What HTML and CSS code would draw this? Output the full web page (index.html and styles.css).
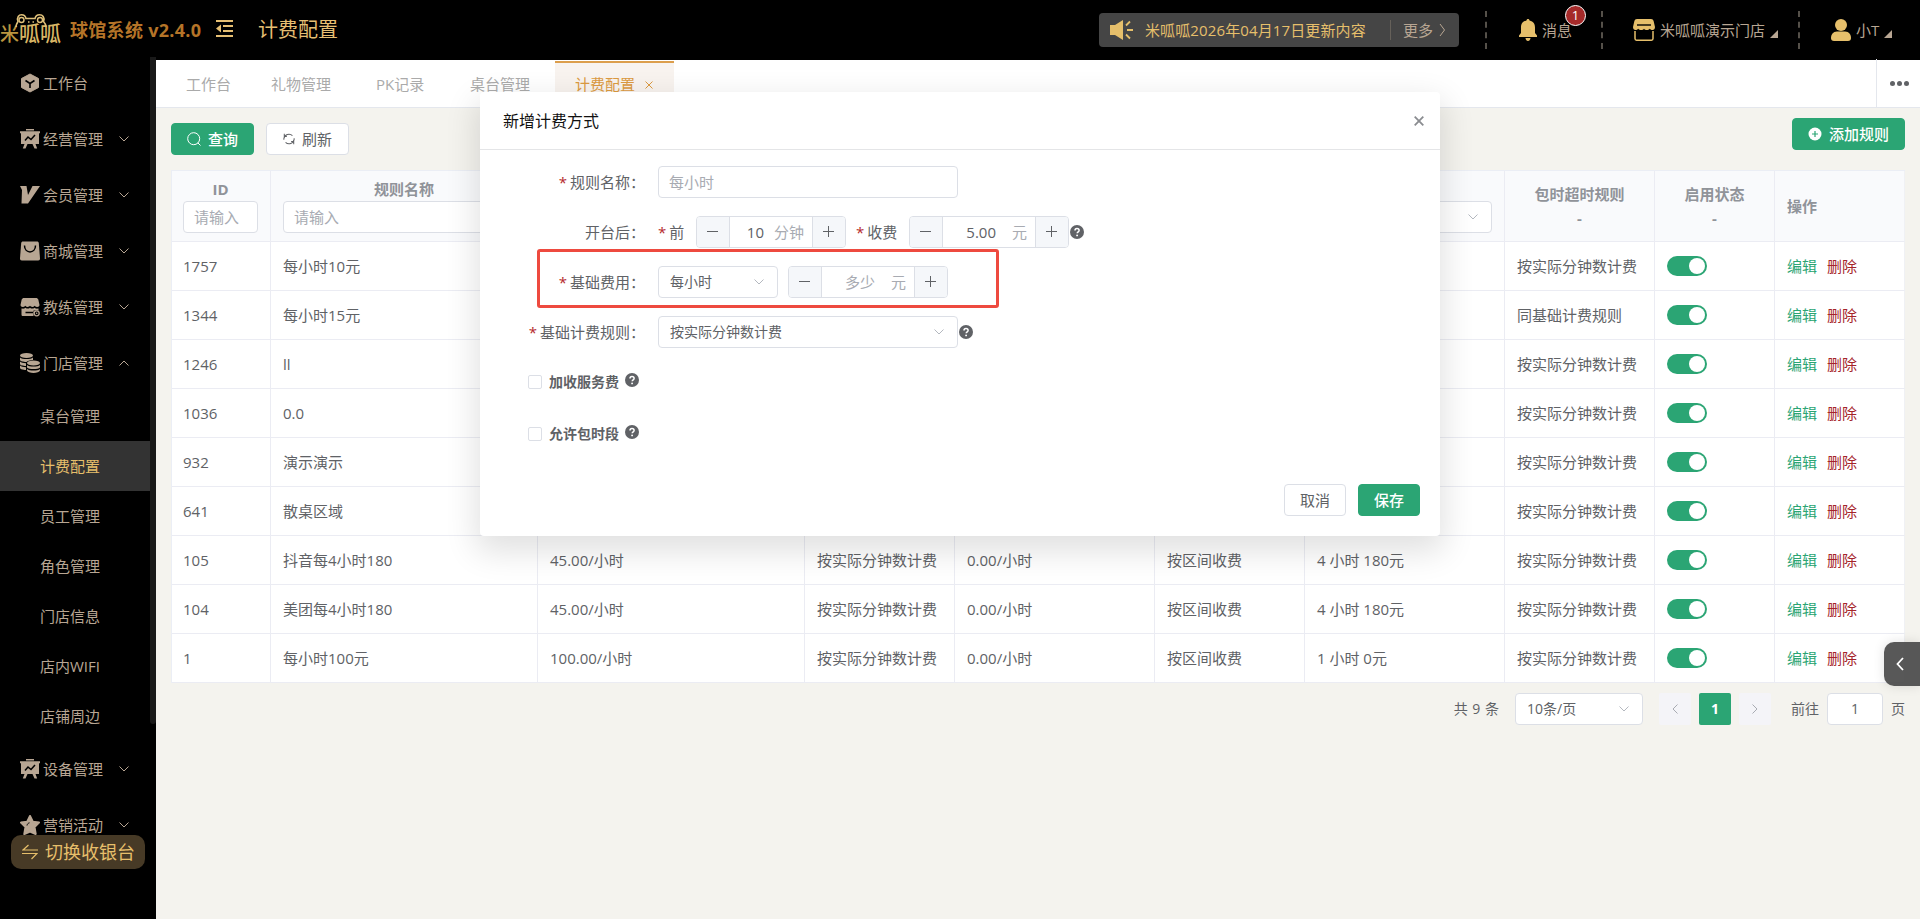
FILE: index.html
```html
<!DOCTYPE html>
<html lang="zh-CN">
<head>
  <meta charset="UTF-8" />
  <meta name="viewport" content="width=device-width, initial-scale=1" />
  <title>计费配置</title>
  <link rel="stylesheet" href="styles.css">
</head>
<body>
  <svg class="sprite" width="0" height="0">
    <symbol id="i-down" viewBox="0 0 12 12"><path d="M1.5 3.5 6 8l4.5-4.5" fill="none" stroke="currentColor"/></symbol>
    <symbol id="i-up" viewBox="0 0 12 12"><path d="M1.5 8.5 6 4l4.5 4.5" fill="none" stroke="currentColor"/></symbol>
    <symbol id="i-left" viewBox="0 0 12 12"><path d="M8.5 1.5 4 6l4.5 4.5" fill="none" stroke="currentColor"/></symbol>
    <symbol id="i-right" viewBox="0 0 12 12"><path d="M3.5 1.5 8 6l-4.5 4.5" fill="none" stroke="currentColor"/></symbol>
    <symbol id="i-help" viewBox="0 0 14 14"><circle cx="7" cy="7" r="7" fill="#606266"/><path d="M5 5.6C5 4.3 5.9 3.6 7 3.6s2.1.7 2.1 1.8c0 1.4-1.9 1.5-1.9 2.9" fill="none" stroke="#fff" stroke-width="1.5"/><circle cx="7.1" cy="10.4" r=".95" fill="#fff"/></symbol>
    <symbol id="i-board" viewBox="0 0 20 20"><path d="M6 0h8v1.500H6zM0 2.300h20v2h-1V15H1V4.300H0zM4.500 15h3l-2 4.500H2.800zM12.500 15h3l1.700 4.500h-2.700z" fill="currentColor"/><path d="m5 11.500 3-3.500 3 2.500 4-4.500" fill="none" stroke="#000" stroke-width="1.500"/></symbol>
  </svg>

  <header class="header">
    <div class="logo">
      <span class="logo-text"><small>米</small>呱呱</span>
      <svg class="frog" width="32" height="13" viewBox="0 0 32 13"><path d="M1 13C1 11 2 9 3 7.500 1.500 3 4 .8 6.500.8c2.500 0 4 1.500 4.500 3.700h9C20.500 2.300 22 .8 24.500.8 27.500.8 30 3 28.500 7.500 30 9 31 11 31 13" fill="none" stroke="#dfc07a" stroke-width="1.600"/><g fill="none" stroke="#dfc07a" stroke-width="1.400"><circle cx="6.500" cy="6" r="2.500"/><circle cx="25" cy="6" r="2.500"/><path d="M13 8h1.500M17.500 8H19"/></g></svg>
    </div>
    <div class="brand">球馆系统 v2.4.0</div>
    <svg class="fold" width="17" height="17" viewBox="0 0 17 17" fill="#e6bf73"><path d="M0 0h17v2H0zM7 5h10v2H7zM7 10h10v2H7zM0 15h17v2H0zM5 4.500v8L0 8.500z"/></svg>
    <div class="page-title">计费配置</div>

    <div class="notice">
      <svg width="24" height="20" viewBox="0 0 24 20"><path d="M0 5h5l8-5v20l-8-5H0z" fill="#e6bf6b"/><path d="M16 5.500 20 1.500M17 10h6M16 14.500l4 4" stroke="#e6bf6b" stroke-width="1.800"/></svg>
      <span class="notice-text">米呱呱2026年04月17日更新内容</span>
      <span class="notice-more">更多<svg width="12" height="14" viewBox="0 0 12 14"><path d="m4 1 4.500 6L4 13" fill="none" stroke="currentColor"/></svg></span>
    </div>
    <div class="head-item msg">
      <svg width="18" height="22" viewBox="0 0 18 22" fill="#e6bf6b"><path d="M9 0c.9 0 1.500.7 1.500 1.500C14.500 2.300 16 5 16 8.500V14l2 2.500V18H0v-1.500L2 14V8.500C2 5 3.500 2.300 7.500 1.500 7.500.7 8.100 0 9 0zM6.500 19h5c0 1.500-1 3-2.500 3s-2.500-1.500-2.500-3z"/></svg>
      <span>消息</span><b class="badge">1</b>
    </div>
    <div class="head-item store">
      <svg width="22" height="22" viewBox="0 0 22 22"><path d="M4 0h14c1.500 0 2.200.7 2.600 2L22 8c0 2-1 3-2.500 3-1 0-2-.5-2.800-1.300-1 1-1.700 1.300-2.900 1.300S11.800 10.700 11 9.700C10.200 10.700 9.500 11 8.200 11s-1.900-.3-2.900-1.300C4.500 10.500 3.500 11 2.500 11 1 11 0 10 0 8l1.400-6C1.800.7 2.500 0 4 0z" fill="#e6bf6b"/><path d="M4 6h14" stroke="#000" stroke-width="1.400"/><path d="M2 12v7.500c0 1 .5 1.700 1.500 1.700h15c1 0 1.500-.7 1.500-1.700V12" fill="none" stroke="#e6bf6b" stroke-width="1.500"/></svg>
      <span>米呱呱演示门店</span><i class="tri"></i>
    </div>
    <div class="head-item user">
      <svg width="20" height="22" viewBox="0 0 20 22" fill="#e6bf6b"><circle cx="10" cy="6" r="6"/><path d="M6 12.500h8c4 0 6 3 6 6.500 0 2-1 3-3 3H3c-2 0-3-1-3-3 0-3.500 2-6.500 6-6.500z"/></svg>
      <span>小T</span><i class="tri"></i>
    </div>
  </header>

  <div class="layout">
    <aside class="sidebar">
      <nav class="menu">
        <div class="menu-item"><svg viewBox="0 0 20 20"><path d="M10 1 18.500 5.500v9L10 19l-8.500-4.500v-9z" fill="currentColor" stroke="currentColor" stroke-linejoin="round"/><path d="m5.500 7.500 4.500 3 4.500-3M10 10.500V15" fill="none" stroke="#000" stroke-width="1.600"/></svg><span>工作台</span></div>
        <div class="menu-item"><svg><use href="#i-board"/></svg><span>经营管理</span><svg class="arrow"><use href="#i-down"/></svg></div>
        <div class="menu-item"><svg viewBox="0 0 20 20"><path d="M0 1h6.500l1.500 9L12.500 1H20L8 18.500H1.500L2 5z" fill="currentColor"/></svg><span>会员管理</span><svg class="arrow"><use href="#i-down"/></svg></div>
        <div class="menu-item"><svg viewBox="0 0 20 20"><path d="M3 .5h14c1 0 1.700.6 1.800 1.500L20 17.500c0 1.200-.6 1.900-1.800 1.900H1.800C.6 19.400 0 18.700 0 17.500L1.200 2C1.300 1.100 2 .5 3 .5z" fill="currentColor"/><path d="M4.500 4.500c0 8.500 11 8.500 11 0" fill="none" stroke="#000" stroke-width="1.500"/></svg><span>商城管理</span><svg class="arrow"><use href="#i-down"/></svg></div>
        <div class="menu-item"><svg viewBox="0 0 20 20"><path d="M4 1h12c1 0 2 .6 2.300 1.500L19.500 8c0 1-1 2-2.300 2-1 0-1.900-.4-2.500-1.200C14 9.600 13.200 10 12.300 10S10.500 9.500 10 8.800C9.500 9.500 8.600 10 7.700 10s-1.700-.4-2.400-1.200C4.700 9.600 3.800 10 2.800 10 1.500 10 .5 9 .5 8l1.200-5.500C2 1.600 3 1 4 1zM1.500 11.500c3 .5 3.500-.5 4-.8 1.500 1.300 3.300 1.100 4.500 0 1.200 1.100 3 1.300 4.500 0 .5.300 1 1.300 4 .8v2h-5v5.500H3c-1 0-1.500-.500-1.500-1.500z" fill="currentColor"/><path d="M5.500 15.500H13" stroke="#000" stroke-width="1.500"/><circle cx="16.700" cy="16.300" r="2.500" fill="#000" stroke="currentColor" stroke-width="1.300"/><circle cx="16.700" cy="16.300" r=".8" fill="currentColor"/></svg><span>教练管理</span><svg class="arrow"><use href="#i-down"/></svg></div>
        <div class="menu-item"><svg viewBox="0 0 20 20" fill="currentColor"><ellipse cx="6.500" cy="2.500" rx="6.500" ry="2.500"/><path d="M0 4.500c2 2 11 2 13 0V7c-3 0-6 1-6.500 2C3 9 0 8 0 7zM0 8.500c1 1.200 3.500 1.700 6 1.700V13C3 13 0 12.300 0 11zM0 12.500c1 1.200 3.500 1.700 6 1.700V17c-3 0-6-1-6-2z"/><ellipse cx="13.500" cy="10" rx="6.500" ry="2.500"/><path d="M7 12c2 2 11 2 13 0v2.500c-2 2-11 2-13 0zM7 16c2 2 11 2 13 0v1.500c-1 3.300-12 3.300-13 0z"/></svg><span>门店管理</span><svg class="arrow"><use href="#i-up"/></svg></div>
        <div class="sub-item">桌台管理</div>
        <div class="sub-item active">计费配置</div>
        <div class="sub-item">员工管理</div>
        <div class="sub-item">角色管理</div>
        <div class="sub-item">门店信息</div>
        <div class="sub-item">店内WIFI</div>
        <div class="sub-item">店铺周边</div>
        <div class="menu-item"><svg><use href="#i-board"/></svg><span>设备管理</span><svg class="arrow"><use href="#i-down"/></svg></div>
        <div class="menu-item"><svg viewBox="0 0 20 20"><path d="m10 1 2.800 5.700 6.200.9-4.500 4.400 1.200 7L10 16.500 4.300 19l1.200-7L1 7.600l6.200-.9z" fill="currentColor" stroke="currentColor" stroke-width="2" stroke-linejoin="round"/><path d="M7 10.500c.3-1.500 1-2.300 2.500-2.700" fill="none" stroke="#000"/></svg><span>营销活动</span><svg class="arrow"><use href="#i-down"/></svg></div>
      </nav>
      <div class="scrollbar"></div>
      <div class="switch-btn">
        <svg width="16" height="16" viewBox="0 0 16 16" fill="none" stroke="currentColor" stroke-width="1.200"><path d="M6.500 1 1 6h15M0 9.500h15L9.500 15"/></svg>切换收银台
      </div>
    </aside>

    <main class="main">
      <div class="tabs">
        <div class="tab first">工作台</div>
        <div class="tab">礼物管理</div>
        <div class="tab pk">PK记录</div>
        <div class="tab">桌台管理</div>
        <div class="tab active">计费配置<svg width="8" height="8" viewBox="0 0 8 8"><path d="m.5.5 7 7m0-7-7 7" stroke="currentColor"/></svg></div>
        <div class="tab-more"><i></i><i></i><i></i></div>
      </div>

      <div class="content">
        <div class="toolbar">
          <button class="btn primary"><svg width="14" height="14" viewBox="0 0 14 14" fill="none" stroke="currentColor"><circle cx="6.700" cy="6.700" r="6"/><path d="m10.800 10.800 2.700 2.700"/></svg>查询</button>
          <button class="btn"><svg width="12" height="12" viewBox="0 0 14 14" fill="none" stroke="currentColor" stroke-width="1.200"><path d="M1 8V6.500A6 6 0 0 1 11 3M13 6v1.500A6 6 0 0 1 3 11M1.500 1v3h3M12.500 13v-3h-3"/></svg>刷新</button>
          <button class="btn primary add"><svg width="14" height="14" viewBox="0 0 14 14"><circle cx="7" cy="7" r="6.500" fill="#fff"/><path d="M7 4v6M4 7h6" stroke="#2ba574" stroke-width="1.200"/></svg>添加规则</button>
        </div>

        <table class="table">
          <colgroup>
            <col class="w100"><col class="w267"><col class="w267"><col class="w150"><col class="w200"><col class="w150"><col class="w200"><col class="w150"><col class="w120"><col class="w130">
          </colgroup>
          <thead>
            <tr>
              <th><div class="caption">ID</div><div class="field">请输入</div></th>
              <th><div class="caption">规则名称</div><div class="field">请输入</div></th>
              <th></th><th></th><th></th><th></th>
              <th><div class="caption"></div><div class="field"><svg class="caret"><use href="#i-down"/></svg></div></th>
              <th>包时超时规则<div class="dash">-</div></th>
              <th>启用状态<div class="dash">-</div></th>
              <th class="left">操作</th>
            </tr>
          </thead>
          <tbody id="rows"></tbody>
        </table>

        <div class="pager">
          <span class="total">共 9 条</span>
          <div class="select size">10条/页<svg class="caret"><use href="#i-down"/></svg></div>
          <div class="page"><svg><use href="#i-left"/></svg></div>
          <div class="page current">1</div>
          <div class="page"><svg><use href="#i-right"/></svg></div>
          <span class="goto">前往</span>
          <div class="goto-input">1</div>
          <span>页</span>
        </div>
      </div>
    </main>
  </div>

  <div class="drawer-handle"><svg width="8" height="14" viewBox="0 0 8 14"><path d="M7 1 1.500 7 7 13" fill="none" stroke="#fff" stroke-width="1.800"/></svg></div>

  <div class="dialog">
    <div class="dialog-head">新增计费方式<svg width="10" height="10" viewBox="0 0 10 10"><path d="m.7.7 8.600 8.600m0-8.600L.7 9.300" stroke="#8a8c90" stroke-width="1.800"/></svg></div>
    <div class="dialog-body">
      <div class="form-row">
        <label><em>*</em>规则名称：</label>
        <div class="select wide placeholder">每小时</div>
      </div>
      <div class="form-row">
        <label>开台后：</label>
        <span class="inner"><em>*</em>前</span>
        <div class="number minutes"><i class="minus"></i><span class="val">10</span><span class="unit">分钟</span><i class="plus"></i></div>
        <span class="inner fee"><em>*</em>收费</span>
        <div class="number"><i class="minus"></i><span class="val">5.00</span><span class="unit">元</span><i class="plus"></i></div>
        <svg class="help"><use href="#i-help"/></svg>
      </div>
      <div class="form-row marked">
        <label><em>*</em>基础费用：</label>
        <div class="select unit-select">每小时<svg class="caret"><use href="#i-down"/></svg></div>
        <div class="number base"><i class="minus"></i><span class="val placeholder">多少</span><span class="unit">元</span><i class="plus"></i></div>
      </div>
      <div class="form-row">
        <label><em>*</em>基础计费规则：</label>
        <div class="select wide">按实际分钟数计费<svg class="caret"><use href="#i-down"/></svg></div>
        <svg class="help"><use href="#i-help"/></svg>
      </div>
      <div class="check-row"><i class="checkbox"></i>加收服务费<svg class="help"><use href="#i-help"/></svg></div>
      <div class="check-row"><i class="checkbox"></i>允许包时段<svg class="help"><use href="#i-help"/></svg></div>
    </div>
    <div class="dialog-foot">
      <button class="btn">取消</button>
      <button class="btn primary">保存</button>
    </div>
  </div>

  <script>
    const byMinute = '按实际分钟数计费';
    const rules = [
      ['1757', '每小时10元', '', '', '', '', '', byMinute],
      ['1344', '每小时15元', '', '', '', '', '', '同基础计费规则'],
      ['1246', 'll', '', '', '', '', '', byMinute],
      ['1036', '0.0', '', '', '', '', '', byMinute],
      ['932', '演示演示', '', '', '', '', '', byMinute],
      ['641', '散桌区域', '', '', '', '', '', byMinute],
      ['105', '抖音每4小时180', '45.00/小时', byMinute, '0.00/小时', '按区间收费', '4 小时 180元', byMinute],
      ['104', '美团每4小时180', '45.00/小时', byMinute, '0.00/小时', '按区间收费', '4 小时 180元', byMinute],
      ['1', '每小时100元', '100.00/小时', byMinute, '0.00/小时', '按区间收费', '1 小时 0元', byMinute]
    ];

    document.getElementById('rows').innerHTML = rules.map(row => `
      <tr>
        ${row.map(cell => `<td>${cell}</td>`).join('')}
        <td><div class="toggle"></div></td>
        <td><a class="edit">编辑</a><a class="del">删除</a></td>
      </tr>`).join('');
  </script>
</body>
</html>
```
FILE: styles.css
```css
*,
*::before,
*::after {
  box-sizing: border-box;
}

body {
  margin: 0;
  height: 919px;
  overflow: hidden;
  position: relative;
  font-family: "Open Sans", "Noto Sans CJK SC", sans-serif;
  font-size: 15px;
  line-height: 20px;
  color: #606266;
  background: #f4f3ee;
}

.sprite {
  position: absolute;
}

i, em {
  font-style: normal;
}

/* header */
.header {
  display: flex;
  align-items: center;
  height: 60px;
  background: #000;
  color: #b8a693;
}

.logo {
  position: relative;
  width: 70px;
  height: 60px;
}

.frog {
  position: absolute;
  left: 15px;
  top: 14px;
}

.logo-text {
  position: absolute;
  left: 0;
  top: 23px;
  font-size: 21px;
  font-weight: 500;
  color: #d9b665;
  white-space: nowrap;
}

.logo-text small {
  font-size: 19px;
  color: #b9943f;
}

.brand {
  width: 146px;
  font-size: 18px;
  font-weight: bold;
  letter-spacing: .3px;
  color: #b57428;
  white-space: nowrap;
}

.fold {
  margin-top: -3px;
}

.page-title {
  margin-left: 25px;
  font-size: 20px;
  color: #e6bf73;
}

.notice {
  display: flex;
  align-items: center;
  width: 360px;
  height: 34px;
  margin-left: auto;
  padding-left: 11px;
  border-radius: 4px;
  background: #454545;
}

.notice-text {
  width: 246px;
  margin-left: 11px;
  border-right: 1px solid #66615a;
  letter-spacing: .12px;
  color: #e6bf6b;
  white-space: nowrap;
}

.notice-more {
  display: flex;
  align-items: center;
  margin-left: 12px;
}

.notice-more svg {
  margin-left: 3px;
}

.head-item {
  display: flex;
  align-items: center;
  height: 38px;
  border-left: 2px dashed #555049;
  position: relative;
}

.msg {
  width: 116px;
  margin-left: 26px;
  padding-left: 32px;
}

.store {
  width: 197px;
  padding-left: 30px;
}

.user {
  width: 122px;
  padding-left: 31px;
}

.head-item span {
  margin-left: 5px;
}

.tri {
  margin: 8px 0 0 5px;
  border-left: 8px solid transparent;
  border-bottom: 8px solid #b8a693;
}

.badge {
  position: absolute;
  left: 78px;
  top: -6px;
  width: 21px;
  height: 21px;
  border: 1px solid #fff;
  border-radius: 50%;
  background: #a52a2a;
  color: #fff;
  font-size: 13px;
  font-weight: normal;
  line-height: 19px;
  text-align: center;
}

.layout {
  display: flex;
  height: 859px;
}

/* sidebar */
.sidebar {
  position: relative;
  width: 156px;
  background: #000;
  color: #b8a693;
}

.menu {
  width: 150px;
  margin-top: -5px;
}

.menu-item {
  display: flex;
  align-items: center;
  height: 56px;
  padding-left: 20px;
}

.menu-item > svg {
  width: 20px;
  height: 20px;
}

.menu-item span {
  width: 75px;
  margin-left: 3px;
}

.menu-item .arrow {
  width: 12px;
  height: 12px;
}

.sub-item {
  height: 50px;
  padding-left: 40px;
  line-height: 50px;
}

.sub-item.active {
  background: #333;
  color: #e6bf6b;
}

.scrollbar {
  position: absolute;
  right: 0;
  top: -3px;
  width: 6px;
  height: 667px;
  border-radius: 0 0 3px 3px;
  background: #191919;
}

.switch-btn {
  position: absolute;
  left: 11px;
  top: 775px;
  display: flex;
  align-items: center;
  gap: 7px;
  width: 134px;
  height: 34px;
  padding-left: 11px;
  border-radius: 10px;
  background: #473a26;
  color: #e6bf6b;
  font-size: 18px;
  white-space: nowrap;
}

/* tabs */
.main {
  flex: 1;
}

.tabs {
  display: flex;
  align-items: flex-end;
  height: 48px;
  padding-left: 10px;
  border-bottom: 1px solid #e4e7ed;
  background: #fff;
  color: #aaa;
}

.tab {
  height: 46px;
  margin-right: 5px;
  padding: 13px 20px 0;
}

.tab.first {
  margin-right: 0;
}

.tab.pk {
  width: 89px;
  white-space: nowrap;
}

.tab.active {
  display: flex;
  gap: 10px;
  width: 119px;
  padding-top: 11px;
  border-top: 2px solid #dc9e4c;
  background: #f8f3ef;
  color: #dc9a40;
}

.tab.active svg {
  margin-top: 7px;
}

.tab-more {
  display: flex;
  align-items: center;
  gap: 2px;
  width: 44px;
  height: 48px;
  margin-left: auto;
  padding-left: 13px;
  border-left: 1px solid #e4e7ed;
}

.tab-more i {
  width: 5px;
  height: 5px;
  border-radius: 50%;
  background: #606266;
}

/* content */
.content {
  padding: 10px 15px 0;
}

.toolbar {
  display: flex;
  align-items: flex-end;
  height: 37px;
  gap: 12px;
}

.btn {
  display: flex;
  align-items: center;
  justify-content: center;
  gap: 7px;
  width: 83px;
  height: 32px;
  padding: 0;
  border: 1px solid #dcdfe6;
  border-radius: 4px;
  background: #fff;
  color: #606266;
  font: inherit;
}

.btn.primary {
  border-color: #2ba574;
  background: #2ba574;
  color: #fff;
  font-weight: 500;
}

.btn.add {
  width: 113px;
  margin: 0 0 5px auto;
}

.table {
  width: 1734px;
  margin-top: 15px;
  border: 1px solid #ebeef5;
  border-width: 1px 0 0 1px;
  border-spacing: 0;
  table-layout: fixed;
  background: #fff;
}

.w100 { width: 99px; }
.w120 { width: 120px; }
.w130 { width: 130px; }
.w150 { width: 150px; }
.w200 { width: 200px; }
.w267 { width: 267px; }

.table th,
.table td {
  padding: 0 12px;
  border: 1px solid #ebecf3;
  border-width: 0 1px 1px 0;
  text-align: left;
  white-space: nowrap;
}

.table td {
  height: 49px;
}

.table td:first-child,
.table th:first-child {
  padding-left: 11px;
}

.table th {
  height: 71px;
  background: #f9fafc;
  color: #909399;
  text-align: center;
}

.table th.left {
  text-align: left;
}

.table th:last-child,
.table td:last-child {
  border-right-color: #f0f1f4;
}

.caption {
  height: 20px;
  line-height: 18px;
}

.field {
  display: flex;
  align-items: center;
  justify-content: flex-start;
  height: 32px;
  margin-top: 1px;
  padding-left: 10px;
  border: 1px solid #dcdfe6;
  border-radius: 4px;
  background: #fff;
  color: #a8abb2;
  font-weight: normal;
}

.dash {
  padding-top: 4px;
}

.caret {
  width: 12px;
  height: 12px;
  margin: 0 12px 0 auto;
  color: #b4b8bf;
}

.toggle {
  display: flex;
  justify-content: flex-end;
  width: 40px;
  height: 20px;
  padding: 2px;
  border-radius: 10px;
  background: #2ba574;
}

.toggle::after {
  content: "";
  width: 16px;
  height: 16px;
  border-radius: 50%;
  background: #fff;
}

.edit {
  margin-right: 10px;
  color: #2ba574;
}

.del {
  color: #a5252a;
}

.pager {
  display: flex;
  align-items: center;
  justify-content: flex-end;
  height: 32px;
  margin-top: 10px;
  font-size: 14px;
}

.total {
  word-spacing: 1px;
}

.select {
  display: flex;
  align-items: center;
  height: 32px;
  padding-left: 11px;
  border: 1px solid #dcdfe6;
  border-radius: 4px;
  background: #fff;
  font-size: 14px;
}

.size {
  width: 128px;
  margin: 0 8px 0 16px;
}

.page {
  display: flex;
  align-items: center;
  justify-content: center;
  width: 32px;
  height: 32px;
  margin-left: 8px;
  border-radius: 2px;
  background: #f4f4f8;
  color: #a8abb2;
}

.page svg {
  width: 12px;
  height: 12px;
}

.page.current {
  background: #2ba574;
  color: #fff;
  font-weight: bold;
}

.goto {
  margin-left: 20px;
}

.goto-input {
  width: 56px;
  height: 32px;
  margin: 0 8px;
  border: 1px solid #dcdfe6;
  border-radius: 4px;
  background: #fff;
  line-height: 30px;
  text-align: center;
}

.drawer-handle {
  position: absolute;
  right: 0;
  top: 642px;
  display: flex;
  align-items: center;
  justify-content: center;
  width: 36px;
  height: 44px;
  padding-right: 5px;
  border-radius: 10px 0 0 10px;
  background: rgba(70, 70, 70, .9);
  box-shadow: 0 0 12px rgba(0, 0, 0, .12);
}

/* dialog */
.dialog {
  position: absolute;
  left: 480px;
  top: 92px;
  width: 960px;
  height: 444px;
  border-radius: 4px;
  background: #fff;
  box-shadow: 0 12px 32px 4px rgba(0, 0, 0, .12);
}

.dialog-head {
  display: flex;
  align-items: center;
  justify-content: space-between;
  height: 58px;
  padding: 0 16px 0 23px;
  border-bottom: 1px solid #e4e5e7;
  color: #111;
  font-size: 16px;
}

.dialog-body {
  height: 334px;
  padding-top: 16px;
}

.form-row {
  display: flex;
  align-items: center;
  width: 620px;
  height: 32px;
  margin-bottom: 18px;
  position: relative;
}

.form-row label {
  width: 178px;
  padding-right: 13px;
  text-align: right;
}

.form-row em {
  margin-right: 3px;
  color: #b5292d;
}

.wide {
  width: 300px;
}

.form-row .wide.placeholder {
  padding-left: 10px;
  font-size: 15px;
}

.placeholder {
  color: #a8abb2;
}

.inner {
  width: 38px;
  white-space: nowrap;
}

.inner.fee {
  width: 53px;
  margin-left: 10px;
}

.number {
  display: flex;
  align-items: center;
  width: 160px;
  height: 32px;
  border: 1px solid #dcdfe6;
  border-radius: 4px;
  overflow: hidden;
}

.minutes {
  width: 150px;
}

.base {
  margin-left: 10px;
}

.number .val {
  flex: 1;
  text-align: right;
}

.number .unit {
  width: 39px;
  padding-right: 8px;
  color: #a8abb2;
  text-align: right;
}

.minutes .unit {
  width: 48px;
}

.minus,
.plus {
  position: relative;
  width: 33px;
  height: 30px;
  background: #f5f7fa;
}

.minus {
  border-right: 1px solid #dcdfe6;
}

.plus {
  border-left: 1px solid #dcdfe6;
}

.minus::before,
.plus::before,
.plus::after {
  content: "";
  position: absolute;
  left: 10px;
  top: 14px;
  width: 11px;
  height: 1px;
  background: #606266;
}

.plus::after {
  transform: rotate(90deg);
}

.help {
  width: 14px;
  height: 14px;
  margin-left: 1px;
}

.marked::after {
  content: "";
  position: absolute;
  left: 57px;
  top: -17px;
  width: 462px;
  height: 59px;
  border: 3px solid #ee4a3f;
  border-radius: 3px;
}

.unit-select {
  width: 120px;
}

.check-row {
  display: flex;
  align-items: center;
  height: 52px;
  margin-top: -10px;
  padding-left: 48px;
  font-size: 14px;
  font-weight: bold;
}

.check-row + .check-row {
  margin-top: 0;
}

.checkbox {
  width: 14px;
  height: 14px;
  margin-right: 7px;
  border: 1px solid #dcdfe6;
  border-radius: 2px;
}

.check-row .help {
  margin: -5px 0 0 6px;
}

.dialog-foot {
  display: flex;
  justify-content: flex-end;
  gap: 12px;
  padding-right: 20px;
}

.dialog-foot .btn {
  width: 62px;
}
```
